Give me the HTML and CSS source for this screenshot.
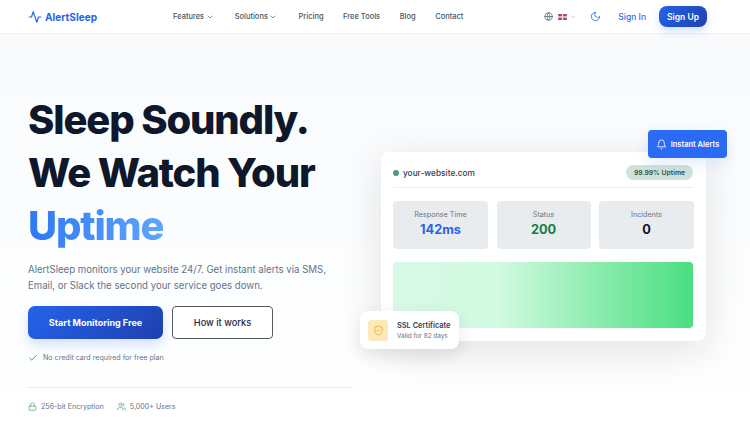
FILE: index.html
```html
<!DOCTYPE html>
<html lang="en">
<head>
<meta charset="utf-8">
<title>AlertSleep</title>
<link rel="stylesheet" href="styles.css">
</head>
<body>
<header class="topbar">
  <a class="logo">
    <svg class="logo-icon" viewBox="0 0 24 24"><path d="M22 12h-4l-3 9L9 3l-3 9H2"/></svg>
    <span>AlertSleep</span>
  </a>
  <nav class="nav">
    <a class="nav-link">Features <svg class="chev" viewBox="0 0 24 24"><path d="m6 9 6 6 6-6"/></svg></a>
    <a class="nav-link">Solutions <svg class="chev" viewBox="0 0 24 24"><path d="m6 9 6 6 6-6"/></svg></a>
    <a class="nav-link">Pricing</a>
    <a class="nav-link">Free Tools</a>
    <a class="nav-link">Blog</a>
    <a class="nav-link">Contact</a>
  </nav>
  <div class="actions">
    <div class="lang">
      <svg class="globe" viewBox="0 0 24 24"><circle cx="12" cy="12" r="10"/><path d="M2 12h20M12 2a15 15 0 0 1 0 20a15 15 0 0 1 0-20"/></svg>
      <svg class="flag" viewBox="0 0 10 7"><rect width="10" height="7" rx="1" fill="#c23c66"/><path d="M0 0l10 7M10 0L0 7" stroke="#5a5f96" stroke-width="1"/><path d="M0 3.500h10M5 0v7" stroke="#f4d9e0" stroke-width="1.500"/></svg>
      <svg class="chev tiny" viewBox="0 0 24 24"><path d="m6 9 6 6 6-6"/></svg>
    </div>
    <svg class="moon" viewBox="0 0 24 24"><path d="M12 3a6 6 0 0 0 9 9 9 9 0 1 1-9-9Z"/></svg>
    <a class="signin">Sign In</a>
    <a class="signup">Sign Up</a>
  </div>
</header>
<main class="hero">
  <section class="copy">
    <h1 class="title">Sleep Soundly.<br>We Watch Your<br><span class="accent">Uptime</span></h1>
    <p class="lead">AlertSleep monitors your website 24/7. Get instant alerts via SMS, Email, or Slack the second your service goes down.</p>
    <div class="cta">
      <a class="btn primary">Start Monitoring Free</a>
      <a class="btn ghost">How it works</a>
    </div>
    <p class="note">
      <svg class="check" viewBox="0 0 24 24"><path d="M20 6 9 17l-5-5"/></svg>
      No credit card required for free plan
    </p>
    <div class="trust">
      <span class="trust-item"><svg class="trust-icon" viewBox="0 0 24 24"><rect x="3" y="11" width="18" height="11" rx="2"/><path d="M7 11V7a5 5 0 0 1 10 0v4"/></svg>256-bit Encryption</span>
      <span class="trust-item"><svg class="trust-icon" viewBox="0 0 24 24"><path d="M16 21v-2a4 4 0 0 0-4-4H6a4 4 0 0 0-4 4v2"/><circle cx="9" cy="7" r="4"/><path d="M22 21v-2a4 4 0 0 0-3-3.870M16 3.130a4 4 0 0 1 0 7.750"/></svg>5,000+ Users</span>
    </div>
  </section>
  <section class="visual">
    <div class="card">
      <div class="card-head">
        <span class="site"><i class="dot"></i>your-website.com</span>
        <span class="badge">99.99% Uptime</span>
      </div>
      <div class="stats">
        <div class="stat"><span class="stat-label">Response Time</span><b class="stat-value blue">142ms</b></div>
        <div class="stat"><span class="stat-label">Status</span><b class="stat-value green">200</b></div>
        <div class="stat"><span class="stat-label">Incidents</span><b class="stat-value">0</b></div>
      </div>
      <div class="chart"></div>
    </div>
    <div class="float-alert">
      <svg class="bell" viewBox="0 0 24 24"><path d="M6 8a6 6 0 0 1 12 0c0 7 3 9 3 9H3s3-2 3-9"/><path d="M10.300 21a1.940 1.940 0 0 0 3.400 0"/></svg>
      Instant Alerts
    </div>
    <div class="float-ssl">
      <span class="ssl-icon"><svg viewBox="0 0 24 24"><path d="M20 13c0 5-3.500 7.500-8 9-4.500-1.500-8-4-8-9V5l8-3 8 3Z"/><path d="m9 12 2 2 4-4"/></svg></span>
      <span class="ssl-text"><b>SSL Certificate</b><small>Valid for 82 days</small></span>
    </div>
  </section>
</main>
</body>
</html>
```
FILE: styles.css
```css
* { box-sizing: border-box; }
html, body { margin: 0; height: 100%; }
body {
  width: 750px;
  height: 428px;
  overflow: hidden;
  font-family: Inter, "Liberation Sans", sans-serif;
  background: #fff;
  color: #0f172a;
}
svg { fill: none; stroke: currentColor; stroke-width: 2; stroke-linecap: round; stroke-linejoin: round; flex: none; }

.topbar {
  height: 34px;
  padding: 0 43px 0 28px;
  display: flex;
  align-items: center;
  background: #fff;
  border-bottom: 1px solid #eef1f5;
}
.logo { display: flex; align-items: center; gap: 3px; color: #2563eb; font-size: 10.100px; font-weight: 700; width: 145px; }
.logo-icon { width: 14px; height: 14px; }
.nav { display: flex; align-items: center; gap: 19.500px; }
.nav-link { display: flex; align-items: center; gap: 1.500px; font-size: 7.500px; font-weight: 500; color: #475569; }
.chev { width: 8px; height: 8px; margin-right: 1.500px; }
.chev.tiny { width: 6px; height: 6px; margin: 0 0 0 -1px; color: #94a3b8; }
.actions { margin-left: auto; display: flex; align-items: center; }
.lang { display: flex; align-items: center; gap: 4px; color: #475569; }
.globe { width: 9px; height: 9px; margin-right: 1px; stroke-width: 1.8; }
.flag { width: 9px; height: 6px; stroke: none; }
.moon { width: 11px; height: 11px; margin-left: 14px; color: #2563eb; stroke-width: 1.8; }
.signin { margin-left: 17px; font-size: 8.500px; font-weight: 500; color: #2f6df0; }
.signup {
  margin-left: 13px;
  height: 21px;
  padding: 0 8px;
  display: flex;
  align-items: center;
  border-radius: 8px;
  background: linear-gradient(135deg, #2563eb, #1e40af);
  box-shadow: 0 4px 8px rgba(37, 99, 235, .2);
  color: #fff;
  font-size: 8.500px;
  font-weight: 600;
}

.hero {
  height: 394px;
  padding: 0 44px 0 28px;
  display: grid;
  grid-template-columns: 325px 325px;
  column-gap: 28px;
  background: linear-gradient(180deg, #f8fafc, #fff);
}
.copy { padding-top: 59px; }
.title { margin: 0; font-size: 40px; line-height: 53px; font-weight: 800; letter-spacing: -1.150px; color: #0f172a; }
.accent {
  background: linear-gradient(90deg, #2f78f5, #60a5fa);
  -webkit-background-clip: text;
  background-clip: text;
  color: transparent;
}
.lead { margin: 10px 0 0; font-size: 9.650px; line-height: 16px; color: #64748b; }
.cta { margin-top: 12px; display: flex; gap: 9px; }
.btn { height: 33px; display: flex; align-items: center; justify-content: center; font-size: 9.250px; }
.primary { width: 135px; border-radius: 7px; font-size: 9px; font-weight: 700; color: #fff; background: linear-gradient(135deg, #2563eb, #1e40af); box-shadow: 0 6px 12px rgba(37, 99, 235, .18); }
.ghost { width: 101px; border-radius: 4px; font-weight: 500; color: #1f2937; background: #fff; border: 1px solid #555b63; }
.note { margin: 14px 0 0; display: flex; align-items: center; gap: 5px; font-size: 7.100px; color: #64748b; }
.check { width: 10px; height: 10px; color: #2f855a; margin: -1px 0; }
.trust { margin-top: 25px; padding-top: 14px; border-top: 1px solid #e8ebf0; display: flex; gap: 13px; font-size: 7.100px; color: #64748b; }
.trust-item { display: flex; align-items: center; gap: 4px; }
.trust-icon { width: 9px; height: 9px; color: #4c9a78; stroke-width: 1.8; }

.visual { position: relative; padding-top: 118px; }
.card {
  height: 189px;
  padding: 10px 13px 10px 12px;
  border-radius: 8px;
  background: #fff;
  box-shadow: 0 10px 40px rgba(15, 23, 42, .12);
}
.card-head { height: 26px; display: flex; align-items: center; justify-content: space-between; padding-bottom: 4px; border-bottom: 1px solid #eceff3; }
.site { display: flex; align-items: center; gap: 4px; font-size: 8.300px; font-weight: 500; color: #334155; }
.dot { width: 6px; height: 6px; border-radius: 50%; background: #4c9a78; }
.badge { height: 15px; padding: 0 8px; display: flex; align-items: center; border-radius: 8px; background: #cfe3da; font-size: 6.750px; font-weight: 600; color: #2f4f45; }
.stats { margin-top: 13px; display: grid; grid-template-columns: 95px 94px 95px; gap: 8.500px; }
.stat { height: 48px; display: flex; flex-direction: column; align-items: center; padding-top: 9px; gap: 3px; border-radius: 4px; background: #e9ecef; }
.stat-label { font-size: 7.200px; color: #6b7280; }
.stat-value { font-size: 12.750px; font-weight: 700; color: #0f172a; }
.blue { color: #2563eb; }
.green { color: #15803d; }
.chart { margin-top: 13px; height: 66px; border-radius: 4px; background: linear-gradient(90deg, #d8f9e7 0%, #d1fae0 35%, #4ade80 100%); }

.float-alert {
  position: absolute;
  top: 96px;
  right: -21px;
  width: 79px;
  height: 28px;
  display: flex;
  align-items: center;
  justify-content: center;
  gap: 4px;
  border-radius: 4px;
  background: #2a6af5;
  box-shadow: 0 6px 14px rgba(37, 99, 235, .12);
  color: #fff;
  font-size: 7.500px;
  font-weight: 600;
}
.bell { width: 11px; height: 11px; stroke-width: 1.8; }
.float-ssl {
  position: absolute;
  top: 277px;
  left: -21px;
  width: 99px;
  height: 38px;
  padding: 0 8px;
  display: flex;
  align-items: center;
  gap: 9px;
  border-radius: 8px;
  background: #fff;
  box-shadow: 0 6px 18px rgba(15, 23, 42, .1);
}
.ssl-icon { width: 20px; height: 21px; display: flex; align-items: center; justify-content: center; border-radius: 3px; background: #fde9b8; color: #e8b23c; }
.ssl-icon svg { width: 11px; height: 11px; }
.ssl-text { display: flex; flex-direction: column; gap: 2px; }
.ssl-text b { font-size: 7.400px; font-weight: 600; color: #334155; white-space: nowrap; }
.ssl-text small { font-size: 6.400px; color: #6b7280; white-space: nowrap; }
```
